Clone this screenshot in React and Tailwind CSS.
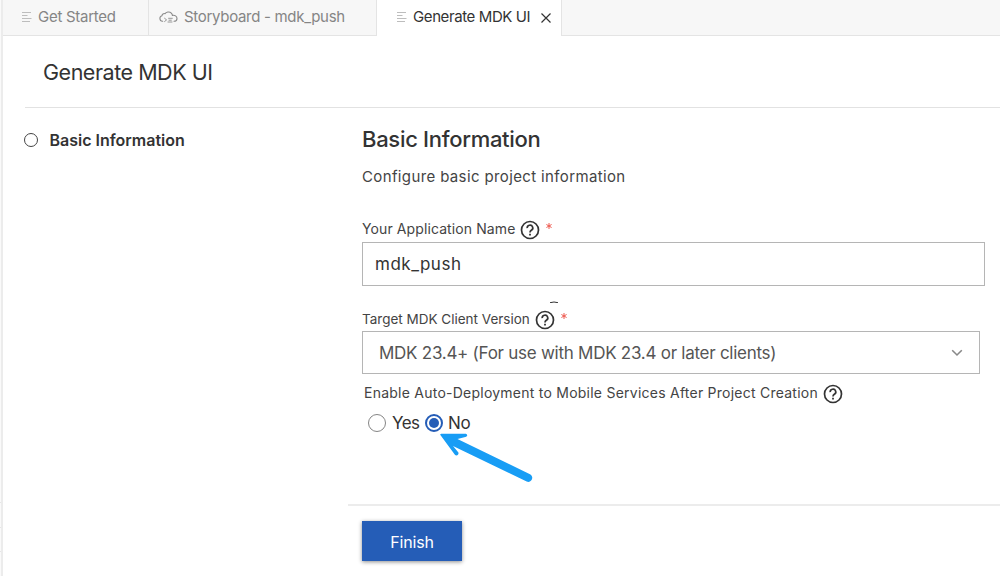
import React from "react";

function LinesIcon() {
  return (
    <svg width="11" height="12" viewBox="0 0 11 12" className="-mt-[2px] shrink-0" stroke="#bdbdbd" strokeWidth="1" fill="none">
      <path d="M0 1.500h9M0 4.500h5.500M0 7.500h9.500M0 10.500h8" />
    </svg>
  );
}

function CloudIcon() {
  return (
    <svg width="20" height="13" viewBox="0 0 20 13" className="-mt-px shrink-0" stroke="#8a8a8a" strokeWidth="1.100" fill="none" strokeLinecap="round" strokeLinejoin="round">
      <path d="M3.700 10.300H3.500A2.800 2.800 0 0 1 3 4.800C3 3.200 4.600 2.200 6 2.700C7 .8 10.500 .2 12.300 2.100C13 2.900 13.400 3.700 13.400 4.400C15.700 3.800 18 5.200 18 7.400C18 9.200 16.700 10.300 15 10.300" />
      <path d="M5.600 7.300L7.600 8.900L5.600 10.500M9 11H13M9.600 7.300H13.300M10 9.200H12.300" strokeWidth=".9" />
    </svg>
  );
}

function HelpIcon() {
  return (
    <svg width="20" height="20" viewBox="0 0 20 20" className="shrink-0" fill="none" stroke="#333" strokeWidth="1.700">
      <circle cx="10" cy="10" r="8.500" />
      <path d="M7.200 8.200A2.800 2.700 0 1 1 11.300 10.300C10.400 10.900 10 11.300 10 12.400" />
      <path d="M10 13.700v1.700" strokeWidth="1.800" />
    </svg>
  );
}

function Required() {
  return (
    <svg width="6" height="6" viewBox="0 0 6 6" className="shrink-0" stroke="#ee5a50" strokeWidth="1">
      <path d="M3 0V6M.4 1.500L5.600 4.500M.4 4.500L5.600 1.500" />
    </svg>
  );
}

export default function App() {
  return (
    <div className="relative flex h-[576px] w-[1000px] overflow-hidden bg-white font-['Inter',sans-serif] text-[#333]">
      <div className="flex w-[3px] shrink-0 flex-col border-r-2 border-[#ececec] bg-[#fafafa] pt-[502px]">
        <div className="h-[25px] border-t border-[#e6e6e6]" />
        <div className="h-6 border-t border-[#e6e6e6]" />
        <div className="border-t border-[#e6e6e6]" />
      </div>
      <div className="flex min-w-0 flex-1 flex-col">
        <nav className="flex h-9 shrink-0 whitespace-nowrap bg-[#f7f7f7] text-[15px] text-[#858585]">
          <div className="flex w-[146px] shrink-0 items-center border-r border-b border-[#e4e4e4] pl-[19px]">
            <LinesIcon />
            <span className="ml-[5px] tracking-[-0.28px]">Get Started</span>
          </div>
          <div className="flex w-[228px] shrink-0 items-center border-r border-b border-[#e4e4e4] pl-[10px]">
            <CloudIcon />
            <span className="ml-[5px] tracking-[-0.3px]">Storyboard - mdk_push</span>
          </div>
          <div className="flex w-[185px] shrink-0 items-center border-r border-[#e4e4e4] bg-white pb-px pl-[20px] text-[#333]">
            <LinesIcon />
            <span className="ml-[5px] tracking-[-0.4px]">Generate MDK UI</span>
            <svg width="10" height="10" viewBox="0 0 10 10" className="ml-[11px] shrink-0" stroke="#333" strokeWidth="1.200">
              <path d="M.5 .5L9.500 9.500M9.500 .5L.5 9.500" />
            </svg>
          </div>
          <div className="flex-1 border-b border-[#e4e4e4]" />
        </nav>

        <header className="ml-[22px] flex h-[72px] shrink-0 items-center border-b border-[#e2e2e2] pl-[18px]">
          <h1 className="whitespace-nowrap text-[21.5px] leading-7 tracking-[-0.47px]">Generate MDK UI</h1>
        </header>

        <div className="flex min-h-0 flex-1">
          <aside className="flex w-[345px] shrink-0 items-start pl-[21px] pt-[22px]">
            <div className="flex items-center gap-[11.5px]">
              <span className="size-[14px] rounded-full border-[1.5px] border-[#444]" />
              <span className="whitespace-nowrap text-[16px] leading-5 font-semibold">Basic Information</span>
            </div>
          </aside>

          <main className="flex min-w-0 flex-1 flex-col">
            <div className="flex h-[396px] shrink-0 flex-col items-start pl-[14px] pt-[17px]">
              <h2 className="whitespace-nowrap text-[22px] leading-7 font-medium tracking-[-0.3px]">Basic Information</h2>
              <p className="mt-[14px] whitespace-nowrap text-[15px] leading-5 tracking-[0.37px] text-[#444]">Configure basic project information</p>

              <div className="mt-[31px] flex h-[22px] items-center">
                <span className="whitespace-nowrap text-[14px] leading-5 tracking-[0.1px] text-[#444]">Your Application Name</span>
                <span className="ml-[5px] mt-[2px]"><HelpIcon /></span>
                <span className="ml-[6px] -mt-[6px]"><Required /></span>
              </div>
              <div className="mt-[2px] flex h-[44px] w-[623px] items-center border border-[#b5b5b5] pt-[2px] pl-[12px] text-[17px] tracking-[0.5px]">
                mdk_push
              </div>

              <svg width="8" height="2" viewBox="0 0 8 2" className="mt-[15px] ml-[188px] shrink-0" fill="none" stroke="#333">
                <path d="M0 1.700Q4 .3 8 1.700" />
              </svg>

              <div className="mt-[5px] flex h-[22px] items-center">
                <span className="whitespace-nowrap text-[13.5px] leading-5 tracking-[0px] text-[#444]">Target MDK Client Version</span>
                <span className="ml-[5px] mt-[2px]"><HelpIcon /></span>
                <span className="ml-[6px] -mt-[6px]"><Required /></span>
              </div>
              <div className="mt-[1px] flex h-[43px] w-[618px] items-center justify-between border border-[#b5b5b5] pl-4 pr-[16px] text-[17px] text-[#555]">
                <span className="whitespace-nowrap pt-[2px] tracking-[-0.26px]">MDK 23.4+ (For use with MDK 23.4 or later clients)</span>
                <svg width="12" height="8" viewBox="0 0 12 8" fill="none" stroke="#888" strokeWidth="1.600">
                  <path d="M1.200 1.300L6 6L10.800 1.300" />
                </svg>
              </div>
              <div className="mt-[8px] ml-[2px] flex h-[22px] items-center">
                <span className="whitespace-nowrap text-[14px] leading-5 tracking-[0.24px] text-[#444]">Enable Auto-Deployment to Mobile Services After Project Creation</span>
                <span className="ml-[5px] mt-px"><HelpIcon /></span>
              </div>
              <div className="mt-[8px] ml-[6px] flex h-[22px] items-center text-[17px]">
                <span className="size-[18px] rounded-full border-[1.5px] border-[#858585]" />
                <span className="ml-[6px] w-[33px] pt-[2px] tracking-[-0.6px]">Yes</span>
                <span className="flex size-[18px] items-center justify-center rounded-full border-2 border-[#255db7]">
                  <span className="size-[10px] rounded-full bg-[#255db7]" />
                </span>
                <span className="ml-[5px] pt-[2px] tracking-[-0.3px]">No</span>
              </div>
            </div>
            <footer className="flex flex-1 items-start border-t-2 border-[#ececec] pl-[14px] pt-[15px]">
              <button className="h-10 w-[100px] bg-[#255db7] pt-px text-[16px] tracking-[-0.2px] text-white shadow-[0_1px_4px_rgba(0,0,0,0.45)]">Finish</button>
            </footer>
          </main>
        </div>
      </div>
      <svg width="96" height="54" viewBox="0 0 96 54" className="absolute top-[431px] left-[438px]" fill="#189df5">
        <path d="M2.200 3.800C2.200 3 3 2.700 4 2.700L27 2.700C29.800 2.700 30 5.200 27.300 5.900L19.500 7.900L92 43.200C96.800 46 93.200 52.500 88.700 50.500L15 15L20.400 21.500C21.200 24 18.300 25.500 16.700 23.500Z" />
      </svg>
    </div>
  );
}
